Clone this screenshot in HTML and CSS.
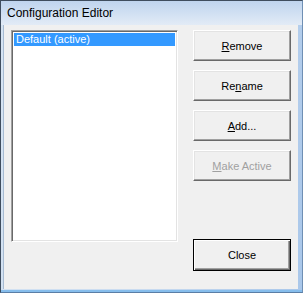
FILE: index.html
```html
<!DOCTYPE html>
<html>
<head>
<meta charset="utf-8">
<link rel="stylesheet" href="styles.css">
</head>
<body>
<div class="window">
  <div class="titlebar">Configuration Editor</div>
  <div class="client">
    <div class="listbox">
      <div class="item selected">Default (active)</div>
    </div>
    <div class="buttons">
      <button class="btn"><u>R</u>emove</button>
      <button class="btn">Re<u>n</u>ame</button>
      <button class="btn"><u>A</u>dd...</button>
      <button class="btn disabled"><u>M</u>ake Active</button>
      <button class="btn default">Close</button>
    </div>
  </div>
</div>
</body>
</html>
```
FILE: styles.css
```css
html, body {
  margin: 0;
  padding: 0;
  background: #f0f0f0;
}
body {
  width: 303px;
  height: 293px;
  overflow: hidden;
  font-family: "Liberation Sans", Arial, sans-serif;
  font-size: 11px;
}
.window {
  box-sizing: border-box;
  width: 303px;
  height: 293px;
  display: flex;
  flex-direction: column;
  border: 1px solid #3f4d5e;
  border-right-color: #6f8fb4;
  border-bottom-color: #5a7ea6;
  padding: 0 4px 3px 3px;
  background: linear-gradient(100deg, #d6e4f3 0%, #c9dbf0 55%, #a9c7ea 100%);
  box-shadow: inset 0 -2px 0 #86bdec;
}
.titlebar {
  height: 24px;
  flex: none;
  display: flex;
  align-items: center;
  padding-left: 3px;
  font-size: 12px;
  color: #000;
  background: linear-gradient(to bottom, #bfd4ee 0%, #d4e2f3 60%, #e2ebf6 100%);
  margin: 0 -4px 0 -3px;
  padding-left: 6px;
}
.client {
  flex: 1;
  display: flex;
  align-items: flex-start;
  background: #f0f0f0;
  padding: 5px 0 0 7px;
  border-left: 1px solid #a7bbd2;
  margin-left: -1px;
}
.listbox {
  box-sizing: border-box;
  width: 167px;
  height: 212px;
  background: #fff;
  border: 1px solid;
  border-color: #a0a0a0 #fff #fff #a0a0a0;
  box-shadow: inset 1px 1px 0 #696969, inset -1px -1px 0 #e3e3e3;
  padding: 2px 2px;
}
.item {
  height: 13px;
  line-height: 13px;
  padding-left: 2px;
}
.selected {
  background: #3399ff;
  color: #fff;
}
.buttons {
  margin-left: 15px;
  height: 241px;
  display: flex;
  flex-direction: column;
  gap: 9px;
}
.btn {
  box-sizing: border-box;
  width: 98px;
  height: 31px;
  margin: 0;
  padding: 0;
  font-family: "Liberation Sans", Arial, sans-serif;
  font-size: 11px;
  color: #000;
  background: #f0f0f0;
  border: 1px solid;
  border-color: #fff #696969 #696969 #fff;
  box-shadow: inset -1px -1px 0 #a0a0a0, inset 1px 1px 0 #e3e3e3;
}
.btn u {
  text-decoration: underline;
}
.disabled {
  color: #a0a0a0;
}
.default {
  margin-top: auto;
  height: 32px;
  border: 1px solid #000;
  box-shadow: inset 1px 1px 0 #fff, inset -1px -1px 0 #696969, inset -2px -2px 0 #a0a0a0;
}
```
